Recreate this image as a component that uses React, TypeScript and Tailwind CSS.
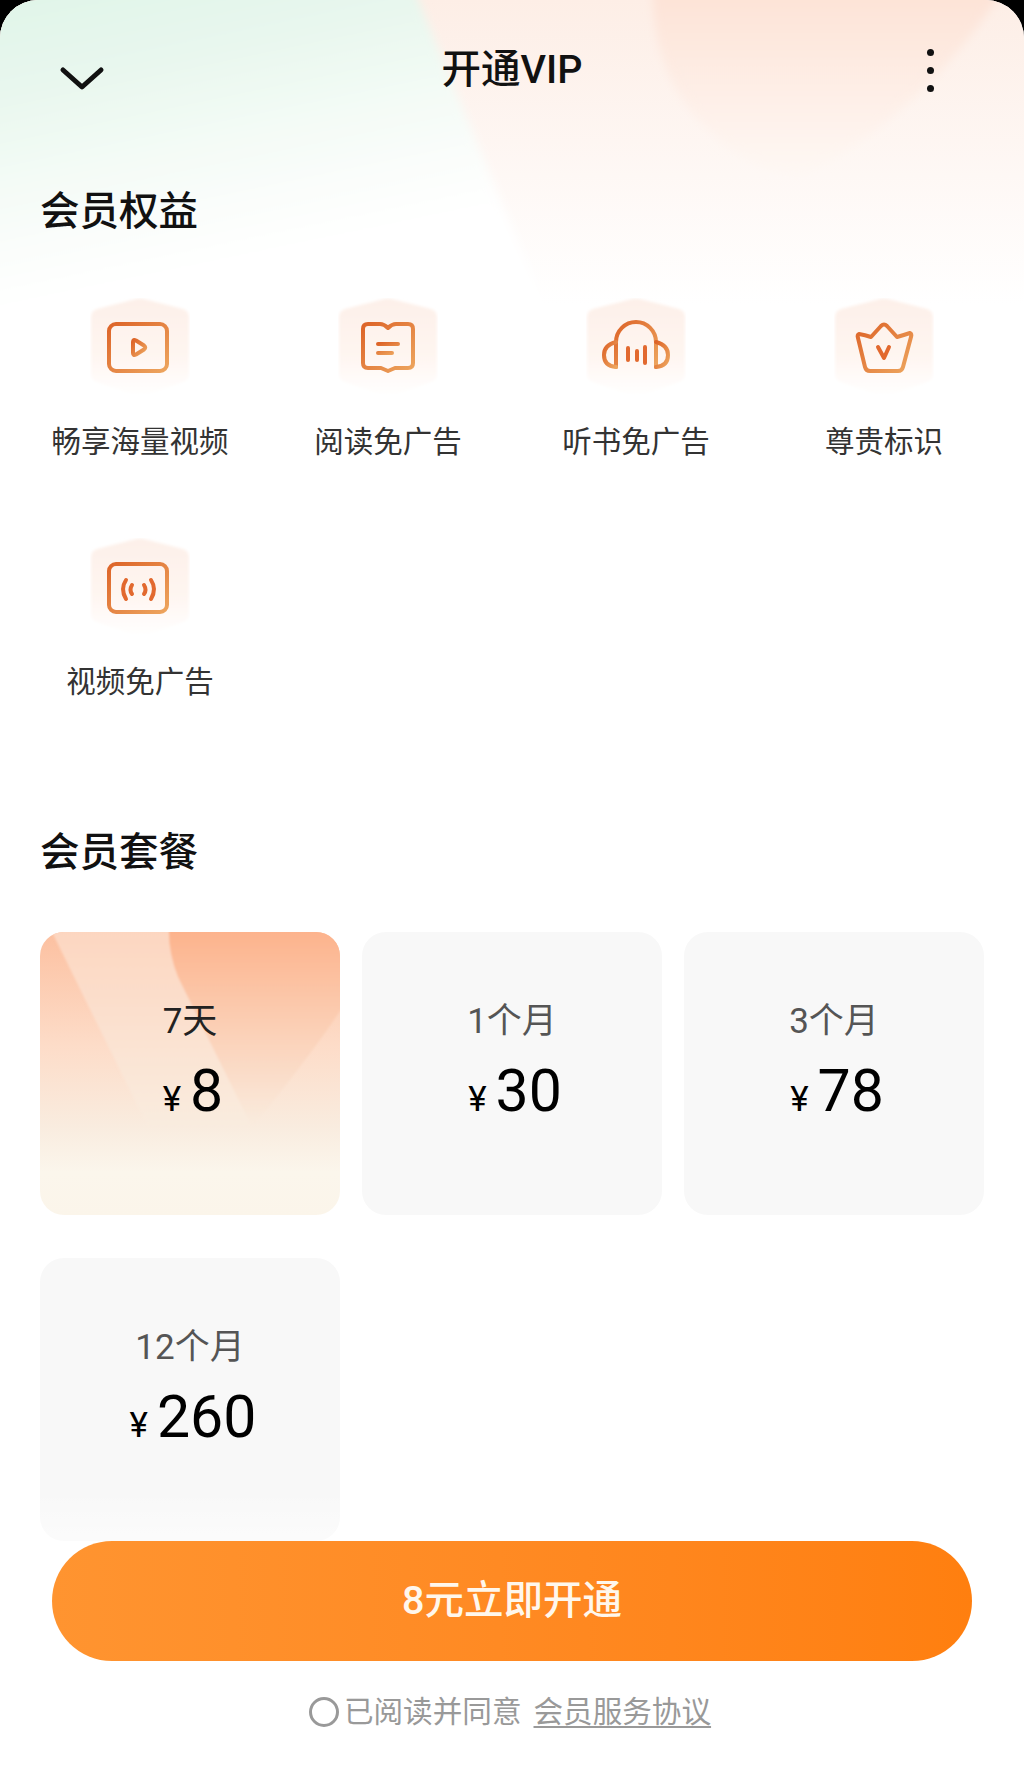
import type { ReactNode } from "react";

const FONT = "font-['Roboto','Noto_Sans_CJK_SC',sans-serif]";

/** Rounded hexagon tile with the orange line icon on top. */
function BenefitIcon({ id, children }: { id: string; children: ReactNode }) {
  return (
    <svg viewBox="0 0 100 100" className="h-[100px] w-[100px]" fill="none">
      <defs>
        <linearGradient id={`tile-${id}`} x1="0" y1="0" x2="0" y2="1">
          <stop offset="0" stopColor="#fdf0e9" />
          <stop offset="0.55" stopColor="#fef5f0" />
          <stop offset="1" stopColor="#ffffff" />
        </linearGradient>
        <linearGradient id={`line-${id}`} x1="0" y1="0" x2="1" y2="1">
          <stop offset="0" stopColor="#dd6428" />
          <stop offset="1" stopColor="#eda55e" />
        </linearGradient>
        <filter id={`soft-${id}`} x="-10%" y="-10%" width="120%" height="120%">
          <feGaussianBlur stdDeviation="1.5" />
        </filter>
      </defs>
      <path
        d="M46 1 Q50 0 54 1 L93 11 Q99 13 99 19 V76 Q99 82 93 84 L54 98 Q50 100 46 98 L7 84 Q1 82 1 76 V19 Q1 13 7 11 Z"
        fill={`url(#tile-${id})`}
        filter={`url(#soft-${id})`}
      />
      <g
        stroke={`url(#line-${id})`}
        strokeWidth="4"
        strokeLinecap="round"
        strokeLinejoin="round"
      >
        {children}
      </g>
    </svg>
  );
}

const benefits = [
  {
    id: "video",
    label: "畅享海量视频",
    icon: (
      <>
        <rect x="19" y="26" width="58" height="47" rx="7" />
        <path d="M43 44 Q43 41 46 42.5 L54 47.5 Q56.5 49.5 54 51.5 L46 56.5 Q43 58 43 55 Z" />
      </>
    ),
  },
  {
    id: "book",
    label: "阅读免广告",
    icon: (
      <>
        <path d="M30 26 H42 Q46 26 50 30 Q54 26 58 26 H70 Q75 26 75 31 V65 Q75 70 70 70 H57 L50 73 L43 70 H30 Q25 70 25 65 V31 Q25 26 30 26 Z" />
        <path d="M40 46 H60 M40 55 H54" />
      </>
    ),
  },
  {
    id: "audio",
    label: "听书免广告",
    icon: (
      <>
        <path d="M30 69 V44 A20 20 0 0 1 70 44 V69" />
        <path d="M30 44 Q18 47 18 57 Q18 68 30 69" />
        <path d="M70 44 Q82 47 82 57 Q82 68 70 69" />
        <path d="M42 50 V62 M51 53 V62 M59 49 V65" stroke="#e2692f" />
      </>
    ),
  },
  {
    id: "crown",
    label: "尊贵标识",
    icon: (
      <>
        <path d="M25 36 Q31 37 37 39 L47 28 Q50 25 53 28 L63 39 Q70 37 76 35 Q78 36 77 39 L69 69 Q68 73 64 73 H36 Q32 73 31 69 L24 40 Q23 37 25 36 Z" />
        <path d="M44 49 L50 60 L55 49" stroke="#e2692f" />
      </>
    ),
  },
  {
    id: "signal",
    label: "视频免广告",
    icon: (
      <>
        <rect x="19" y="26" width="58" height="48" rx="7" />
        <path d="M36 42 Q30 51 36 61 M42 47 Q39 52 42 56 M61 42 Q67 51 61 61 M54 47 Q57 52 54 56" stroke="#e2692f" />
      </>
    ),
  },
];

const plans = [
  { label: "7天", price: "8", active: true },
  { label: "1个月", price: "30" },
  { label: "3个月", price: "78" },
  { label: "12个月", price: "260" },
];

function PlanCard({ label, price, active }: { label: string; price: string; active?: boolean }) {
  return (
    <div
      className={`relative flex h-[283px] flex-col items-center overflow-hidden rounded-[24px] pt-[60px] ${
        active
          ? "bg-[linear-gradient(180deg,#fcc0a0_0%,#fddcc8_40%,#f9ecdf_69%,#fbf6ec_85%,#fbf5ea_100%)]"
          : "bg-[#f8f8f8]"
      }`}
    >
      {active && (
        <svg viewBox="0 0 300 283" className="absolute inset-0 h-full w-full" fill="none">
          <defs>
            <linearGradient id="plan-dark" x1="0" y1="0" x2="0" y2="1">
              <stop offset="0" stopColor="#fdb28b" />
              <stop offset="1" stopColor="#f9ecdf" />
            </linearGradient>
            <linearGradient id="plan-band" x1="0" y1="0" x2="0" y2="1">
              <stop offset="0" stopColor="#fdd6c0" />
              <stop offset="1" stopColor="#f9ecdf" />
            </linearGradient>
            <filter id="plan-soft" x="-5%" y="-5%" width="110%" height="110%">
              <feGaussianBlur stdDeviation="1.2" />
            </filter>
          </defs>
          <g filter="url(#plan-soft)">
            <path d="M10 -4 H130 L212 195 H108 Z" fill="url(#plan-band)" />
            <path d="M129 -4 H304 V73 Q270 125 212 195 L138 45 Q128 20 129 -4 Z" fill="url(#plan-dark)" />
          </g>
        </svg>
      )}
      <div
        className={`relative h-[60px] text-[35px] leading-[60px] ${
          active ? "text-[#222222]" : "text-[#555555]"
        }`}
      >
        {label}
      </div>
      <div className="relative ml-[6px] mt-[4px] flex h-[70px] items-baseline text-black">
        <span className="mr-[9px] text-[35px] leading-[70px]">¥</span>
        <span className="text-[59px] leading-[70px]">{price}</span>
      </div>
    </div>
  );
}

export default function App() {
  return (
    <div className={`h-[1782px] w-[1024px] overflow-hidden bg-black ${FONT}`}>
      <div className="relative flex h-full flex-col overflow-hidden rounded-t-[38px] bg-white">
        {/* Top wash behind the header */}
        <svg viewBox="0 0 1024 320" className="absolute left-0 top-0 h-[320px] w-[1024px]" fill="none">
          <defs>
            <linearGradient id="wash-green" x1="0" y1="0" x2="0.35" y2="1">
              <stop offset="0" stopColor="#def4e7" />
              <stop offset="0.3" stopColor="#e8f7ee" />
              <stop offset="0.55" stopColor="#f4fbf6" />
              <stop offset="0.8" stopColor="#fdfefd" />
              <stop offset="0.9" stopColor="#ffffff" />
            </linearGradient>
            <linearGradient id="wash-peach" x1="0" y1="0" x2="0" y2="1">
              <stop offset="0" stopColor="#fdeee6" />
              <stop offset="0.55" stopColor="#fef8f5" />
              <stop offset="0.95" stopColor="#ffffff" />
            </linearGradient>
            <linearGradient id="wash-deep" x1="0" y1="0" x2="0" y2="1">
              <stop offset="0" stopColor="#fde1d4" />
              <stop offset="1" stopColor="#fef8f4" />
            </linearGradient>
            <filter id="wash-soft" x="-5%" y="-5%" width="110%" height="110%">
              <feGaussianBlur stdDeviation="5" />
            </filter>
          </defs>
          <rect width="1024" height="320" fill="url(#wash-peach)" />
          <path d="M-20 -20 H410 L550 320 H-20 Z" fill="url(#wash-green)" filter="url(#wash-soft)" />
          <path d="M653 -20 Q650 60 690 110 Q740 170 800 175 Q920 120 1010 -20 Z" fill="url(#wash-deep)" filter="url(#wash-soft)" />
        </svg>

        <main className="relative h-[1541px] shrink-0 overflow-hidden">
          <header className="grid h-[140px] grid-cols-[1fr_auto_1fr] items-center px-[58px]">
            <svg viewBox="0 0 48 28" className="mt-[18px] h-[28px] w-[48px]" fill="none">
              <path d="M5 5 L24 22 L43 5" stroke="#111111" strokeWidth="5" strokeLinecap="round" strokeLinejoin="round" />
            </svg>
            <h1 className="text-center text-[39.5px] font-medium text-[#111111]">开通VIP</h1>
            <div className="flex flex-col items-end gap-[11px] pr-[32px]">
              <span className="h-[7px] w-[7px] rounded-full bg-[#111111]" />
              <span className="h-[7px] w-[7px] rounded-full bg-[#111111]" />
              <span className="h-[7px] w-[7px] rounded-full bg-[#111111]" />
            </div>
          </header>

          <h2 className="mt-[42px] px-10 text-[39.5px] font-medium leading-[60px] text-[#111111]">会员权益</h2>

          <div className="mt-[56px] grid grid-cols-4 px-4">
            {benefits.map((b) => (
              <div key={b.id} className="flex h-[240px] flex-col items-center">
                <BenefitIcon id={b.id}>{b.icon}</BenefitIcon>
                <div className="mt-[24px] text-[29.5px] leading-[40px] text-[#333333]">{b.label}</div>
              </div>
            ))}
          </div>

          <h2 className="mt-[45px] px-10 text-[39.5px] font-medium leading-[60px] text-[#111111]">会员套餐</h2>

          <div className="mt-[49px] grid grid-cols-3 gap-x-[22px] gap-y-[43px] px-10">
            {plans.map((p) => (
              <PlanCard key={p.label} {...p} />
            ))}
          </div>

          {/* Content fades out above the button */}
          <div className="absolute bottom-0 left-0 h-[50px] w-full bg-gradient-to-b from-white/0 to-white/50" />
        </main>

        <footer className="relative flex flex-1 flex-col items-center">
          <button className="h-[120px] w-[920px] rounded-full bg-gradient-to-r from-[#ff9430] to-[#ff7f0f] text-[39.5px] font-medium text-[#fff7ec]">
            8元立即开通
          </button>
          <div className="mt-[31px] flex items-center pr-[4px] text-[29.6px] leading-[40px] text-[#999999]">
            <span className="mr-[5px] h-[30px] w-[30px] rounded-full border-[3px] border-[#999999]" />
            <span>已阅读并同意</span>
            <span className="ml-[12px] underline underline-offset-4">会员服务协议</span>
          </div>
        </footer>
      </div>
    </div>
  );
}
